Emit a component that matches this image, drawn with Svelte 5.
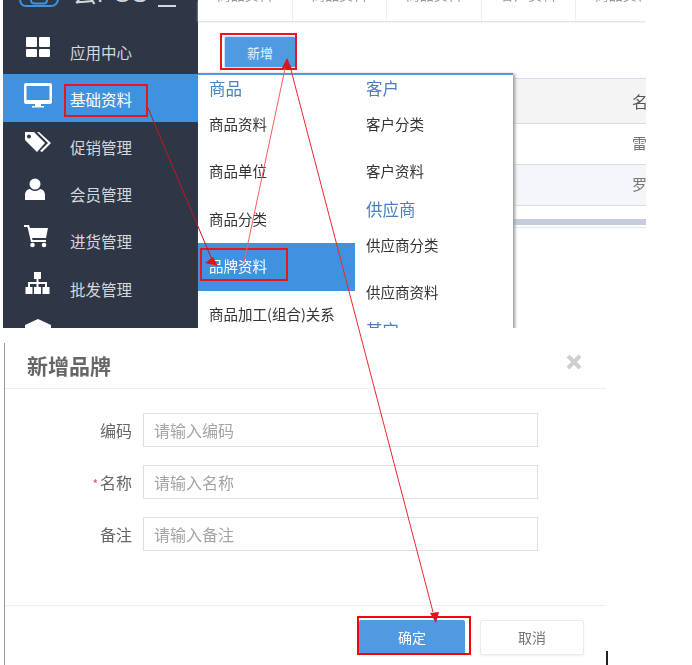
<script>
	const navItems = [
		{label: "应用中心", icon: "apps"},
		{label: "基础资料", icon: "monitor", active: true},
		{label: "促销管理", icon: "tags"},
		{label: "会员管理", icon: "user"},
		{label: "进货管理", icon: "cart"},
		{label: "批发管理", icon: "sitemap"},
		{label: "", icon: "box"},
	]
	const tabs = ["商品资料", "商品资料", "商品资料", "客户资料", "商品资料"]
	const goodsMenu = ["商品资料", "商品单位", "商品分类", "品牌资料", "商品加工(组合)关系"]
	const fields = [
		{label: "编码", hint: "请输入编码"},
		{label: "名称", hint: "请输入名称", required: true},
		{label: "备注", hint: "请输入备注"},
	]
</script>

<div class="page">
	<section class="shot">
		<aside class="sidebar">
			<div class="brand">
				<svg class="logo" width="40" height="8" viewBox="0 0 40 8">
					<path d="M1 0c.5 4 2 6 6 6h25c4 0 6-2 7-6" fill="none" stroke="#3f92e0" stroke-width="2" />
					<path d="M12 0c0 3 1 3.5 4 3.5h9c2 0 3-1 3-3.5" fill="none" stroke="#3f92e0" stroke-width="2" />
				</svg>
				<span class="brand-name">云POS</span>
				<span class="brand-bar"></span>
			</div>
			{#each navItems as item}
				<div class="nav-row" class:active={item.active}>
					<svg class="nav-icon" width="28" height="26" viewBox="0 0 28 26" fill="#fff">
						{#if item.icon === "apps"}
							<rect x="2" y="1" width="11" height="10" rx="1" />
							<rect x="15" y="1" width="11" height="10" rx="1" />
							<rect x="2" y="13" width="11" height="8" rx="1" />
							<rect x="15" y="13" width="11" height="8" rx="1" />
						{:else if item.icon === "monitor"}
							<path fill-rule="evenodd" d="M2 0h24a2 2 0 0 1 2 2v17a2 2 0 0 1-2 2H17v2h3v1.500H8V23h3v-2H2a2 2 0 0 1-2-2V2a2 2 0 0 1 2-2zm.5 3v14h23V3z" />
						{:else if item.icon === "tags"}
							<path d="M1 2h9l11 11-8 9L1 10zm4 2.500a2 2 0 1 0 0 4 2 2 0 0 0 0-4z" fill-rule="evenodd" />
							<path d="M13 2h2l12 11-9 9-2-1 8-8z" />
						{:else if item.icon === "user"}
							<circle cx="11" cy="6" r="5.500" />
							<path d="M1 22v-5c0-4 3-6 5-6 1 1 3 2 5 2s4-1 5-2c2 0 5 2 5 6v5z" />
						{:else if item.icon === "cart"}
							<path d="M0 0h5l1 3h18l-2 10H8l.5 2H22v2H7L3.500 2H0z" />
							<circle cx="8.500" cy="20" r="2.300" />
							<circle cx="20" cy="20" r="2.300" />
						{:else if item.icon === "sitemap"}
							<path d="M10 0h7v7h-2.500v3H23v5h2.500v7h-7v-7H21v-3h-6.500v3H17v7h-7v-7h2.500v-3H6v3h2.500v7h-7v-7H4v-5h8.500V7H10z" />
						{:else}
							<path d="M14 0l13 6v20H1V6z" />
						{/if}
					</svg>
					<span class="nav-label">{item.label}</span>
				</div>
			{/each}
		</aside>

		<div class="content">
			<nav class="tabs">
				{#each tabs as tab}
					<span class="tab"><span>{tab}</span></span>
				{/each}
			</nav>
			<div class="toolbar">
				<button class="add-btn">新增</button>
			</div>
			<div class="table">
				<div class="cell head">名称</div>
				<div class="cell">雷克萨斯</div>
				<div class="cell alt">罗技</div>
				<div class="scrollbar"></div>
			</div>

			<div class="flyout">
				<div class="menu-col">
					<h4 class="menu-head">商品</h4>
					{#each goodsMenu as entry}
						<div class="menu-item" class:current={entry === "品牌资料"}>{entry}</div>
					{/each}
				</div>
				<div class="menu-col">
					<h4 class="menu-head">客户</h4>
					<div class="menu-item">客户分类</div>
					<div class="menu-item">客户资料</div>
					<h4 class="menu-head">供应商</h4>
					<div class="menu-item">供应商分类</div>
					<div class="menu-item">供应商资料</div>
					<h4 class="menu-head">其它</h4>
				</div>
			</div>
		</div>
	</section>

	<div class="lower">
		<section class="dialog">
			<header class="dialog-head">
				<h3>新增品牌</h3>
				<svg class="close" width="16" height="16" viewBox="0 0 16 16">
					<path d="M2 2l12 12M14 2L2 14" stroke="#cfcfcf" stroke-width="4" />
				</svg>
			</header>
			<div class="form">
				{#each fields as field}
					<div class="field">
						<span class="field-label">
							{#if field.required}<i>*</i>{/if}{field.label}
						</span>
						<input class="field-input" placeholder={field.hint} />
					</div>
				{/each}
			</div>
			<footer class="dialog-foot">
				<button class="ok">确定</button>
				<button class="cancel">取消</button>
			</footer>
		</section>
		<span class="caret"></span>
	</div>

	<div class="mark m1"></div>
	<div class="mark m2"></div>
	<div class="mark m3"></div>
	<div class="mark m4"></div>
	<svg class="arrows" width="692" height="665" viewBox="0 0 692 665">
		<path d="M148 108L213 262" stroke="#c4161c" stroke-width="1" fill="none" />
		<path d="M218 266l-13-3 8-6z" fill="#e0141a" />
		<path d="M244 262L286 64" stroke="#ff5a5f" stroke-width="1" fill="none" />
		<path d="M287 58l5 11-10-1z" fill="#e0141a" />
		<path d="M291 70L433 612" stroke="#f0262c" stroke-width="1" fill="none" />
		<path d="M436 623l-6-10 9-1z" fill="#e0141a" />
	</svg>
</div>

<style>
	:global(body) {
		background: #fff;
	}

	.page {
		position: relative;
		width: 692px;
		height: 665px;
		overflow: hidden;
		font-family: "Noto Sans CJK SC", "Liberation Sans", sans-serif;
	}

	.shot {
		display: flex;
		width: 643px;
		height: 328px;
		margin-left: 3px;
		overflow: hidden;
		filter: blur(0.5px);
	}

	.sidebar {
		width: 195px;
		flex: none;
		background: #2f3747;
		overflow: hidden;
	}

	.brand {
		display: flex;
		height: 27px;
		padding-left: 16px;
		overflow: hidden;
	}

	.logo {
		flex: none;
	}

	.brand-name {
		width: 71px;
		flex: none;
		margin: -21px 0 0 14px;
		font-family: "Liberation Sans", "Noto Sans CJK SC", sans-serif;
		font-size: 24px;
		line-height: 30px;
		height: 30px;
		white-space: nowrap;
		color: #d5d8dd;
	}

	.brand-bar {
		width: 18px;
		height: 2px;
		margin: 5px 0 0 14px;
		background: #d5d8dd;
	}

	.nav-row {
		display: flex;
		align-items: center;
		height: 47.3px;
		padding-left: 21px;
		color: #d5d8dd;
	}

	.nav-row.active {
		background: #3f92e0;
		color: #fff;
	}

	.nav-icon {
		flex: none;
		margin-top: -4px;
	}

	.nav-label {
		margin: 3px 0 0 18px;
		font-size: 15.5px;
		line-height: 20px;
	}

	.content {
		position: relative;
		flex: 1;
		min-width: 0;
	}

	.tabs {
		display: flex;
		height: 21px;
		overflow: hidden;
		box-shadow: 0 1px 2px #d8d8d8;
	}

	.tab {
		flex: none;
		box-sizing: border-box;
		width: 94.5px;
		border-right: 1px solid #eeeeee;
		text-align: center;
		overflow: hidden;
		font-size: 14px;
		color: #999;
	}

	.tab span {
		display: block;
		line-height: 20px;
		margin-top: -16px;
	}

	.toolbar {
		padding: 15px 0 0 26px;
		height: 42px;
	}

	.add-btn {
		width: 72px;
		height: 32px;
		margin: 0;
		padding: 0;
		border: 1px solid #c9dff5;
		border-radius: 2px;
		background: #4f9ae0;
		color: #e8f2fc;
		font: inherit;
		font-size: 13px;
	}

	.table {
		display: flex;
		flex-direction: column;
		align-items: stretch;
		padding-left: 315px;
		font-size: 15px;
		color: #777;
	}

	.cell {
		box-sizing: border-box;
		height: 41px;
		padding-left: 119px;
		line-height: 38px;
		white-space: nowrap;
		overflow: hidden;
		border-bottom: 1px solid #d7dde8;
	}

	.cell.head {
		height: 46px;
		line-height: 44px;
		color: #555;
		font-size: 16px;
		background: #f4f4f4;
		border-top: 1px solid #d7dde8;
	}

	.cell.alt {
		background: #f4f6fa;
	}

	.scrollbar {
		height: 6px;
		margin-top: 13px;
		background: #c5cddc;
		box-shadow: 0 2px 0 #fff, 0 3px 0 #e3e7ef;
	}

	.flyout {
		position: absolute;
		top: 73px;
		left: 0;
		display: grid;
		grid-template-columns: 157px 1fr;
		width: 315px;
		height: 270px;
		background: #fff;
		border-top: 2px solid #4a9be8;
		box-shadow: 2px 1px 3px #9a9a9a;
	}

	.menu-head {
		height: 26px;
		margin: 0;
		padding-left: 11px;
		font-size: 16.5px;
		font-weight: 400;
		line-height: 26px;
		color: #4a7fc0;
	}

	.menu-item {
		height: 47.4px;
		padding-left: 11px;
		font-size: 14.5px;
		line-height: 46px;
		color: #333;
		white-space: nowrap;
	}

	.menu-item.current {
		background: #3f92e0;
		color: #fff;
	}

	.lower {
		display: flex;
		align-items: flex-end;
		height: 322px;
		margin: 15px 0 0 4px;
	}

	.dialog {
		display: flex;
		flex-direction: column;
		width: 601px;
		height: 322px;
		border-left: 1px solid #98989c;
		filter: blur(0.5px);
	}

	.dialog-head {
		display: flex;
		justify-content: space-between;
		height: 45px;
		flex: none;
		border-bottom: 1px solid #eceff1;
	}

	.dialog-head h3 {
		margin: 7px 0 0 22px;
		font-size: 21px;
		font-weight: 700;
		line-height: 30px;
		color: #666;
	}

	.close {
		margin: 11px 24px 0 0;
	}

	.form {
		display: flex;
		flex-direction: column;
		gap: 18px;
		flex: 1;
		padding-top: 24px;
	}

	.field {
		display: flex;
		align-items: center;
		gap: 11px;
	}

	.field-label {
		width: 127px;
		text-align: right;
		font-size: 16px;
		color: #666;
	}

	.field-label i {
		color: #ef4a5a;
		font-style: normal;
		font-size: 12px;
		margin-right: 2px;
	}

	.field-input {
		box-sizing: border-box;
		width: 395px;
		height: 34px;
		padding: 0 10px;
		border: 1px solid #d9e1e6;
		border-radius: 0;
		outline: none;
		font: inherit;
		font-size: 16px;
		background: #fff;
	}

	.field-input::placeholder {
		color: #a4a4a4;
	}

	.dialog-foot {
		display: flex;
		gap: 15px;
		flex: none;
		height: 60px;
		padding: 14px 0 0 354px;
		box-sizing: border-box;
		border-top: 1px solid #eceff1;
	}

	.dialog-foot button {
		height: 35px;
		margin: 0;
		padding: 0 0 2px;
		font: inherit;
		font-size: 14px;
		border-radius: 2px;
	}

	.ok {
		width: 106px;
		border: none;
		background: #4f9ae0;
		color: #fff;
	}

	.cancel {
		width: 104px;
		border: 1px solid #e8ecef;
		background: #fff;
		color: #777;
		box-shadow: 0 1px 2px #eceff1;
	}

	.caret {
		width: 2px;
		height: 14px;
		background: #222;
	}

	.mark {
		position: absolute;
		box-sizing: border-box;
		border: 2px solid #e8151b;
	}

	.m1 {
		left: 64px;
		top: 84px;
		width: 84px;
		height: 33px;
	}

	.m2 {
		left: 200px;
		top: 248px;
		width: 88px;
		height: 33px;
	}

	.m3 {
		left: 220px;
		top: 33px;
		width: 77px;
		height: 37px;
	}

	.m4 {
		left: 357px;
		top: 616px;
		width: 114px;
		height: 39px;
		border-color: #fb0007;
	}

	.arrows {
		position: absolute;
		top: 0;
		left: 0;
		pointer-events: none;
	}
</style>
